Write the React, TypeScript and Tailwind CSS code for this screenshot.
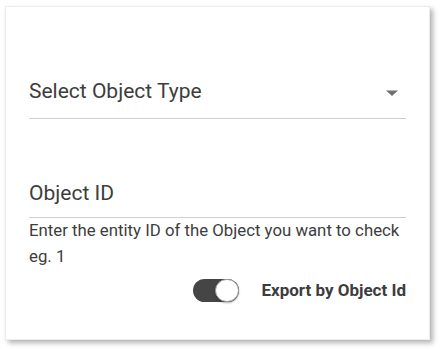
import React, { useState } from 'react';

const App: React.FC = () => {
  const [exportById, setExportById] = useState(true);

  return (
    <div className="w-[440px] h-[350px] bg-white pt-[6px] pl-[5px]" style={{ fontFamily: 'Roboto, "Liberation Sans", sans-serif' }}>
      <div className="w-[425px] h-[334px] bg-white border border-[#ececec] shadow-[3px_3px_5px_rgba(0,0,0,0.3)] pl-[23px] pr-[23px] pt-[70px]">
        {/* Select field */}
        <div className="flex items-center justify-between border-b border-[#cfcfcf] pb-[12px]">
          <span className="text-[21px] leading-[29px] text-[#3d3d3d]">Select Object Type</span>
          <svg width="14" height="8" viewBox="0 0 14 8" className="mr-[7px] mt-[2px]">
            <path d="M1 1.5 L13 1.5 L7 7 Z" fill="#6f6f6f" />
          </svg>
        </div>

        {/* Object ID field */}
        <div className="mt-[60px] border-b border-[#cfcfcf] pb-[9px]">
          <span className="text-[21px] leading-[29px] text-[#3d3d3d]">Object ID</span>
        </div>
        <p className="text-[16.8px] leading-[26px] text-[#3d3d3d] -mt-[1px]">
          Enter the entity ID of the Object you want to check
          <br />
          eg. 1
        </p>

        {/* Toggle */}
        <div className="flex items-center justify-end gap-[22px] mt-[9px]">
          <button
            type="button"
            onClick={() => setExportById(!exportById)}
            className="relative w-[46px] h-[23px] rounded-full bg-[#454545]"
          >
            <span
              className={`absolute top-0 w-[24px] h-[23px] rounded-full bg-white border border-[#9a9a9a] shadow-[0_1px_2px_rgba(0,0,0,0.3)] ${exportById ? 'left-[22px]' : 'left-0'}`}
            />
          </button>
          <span className="text-[17px] font-bold text-[#3d3d3d]">Export by Object Id</span>
        </div>
      </div>
    </div>
  );
};

export default App;
